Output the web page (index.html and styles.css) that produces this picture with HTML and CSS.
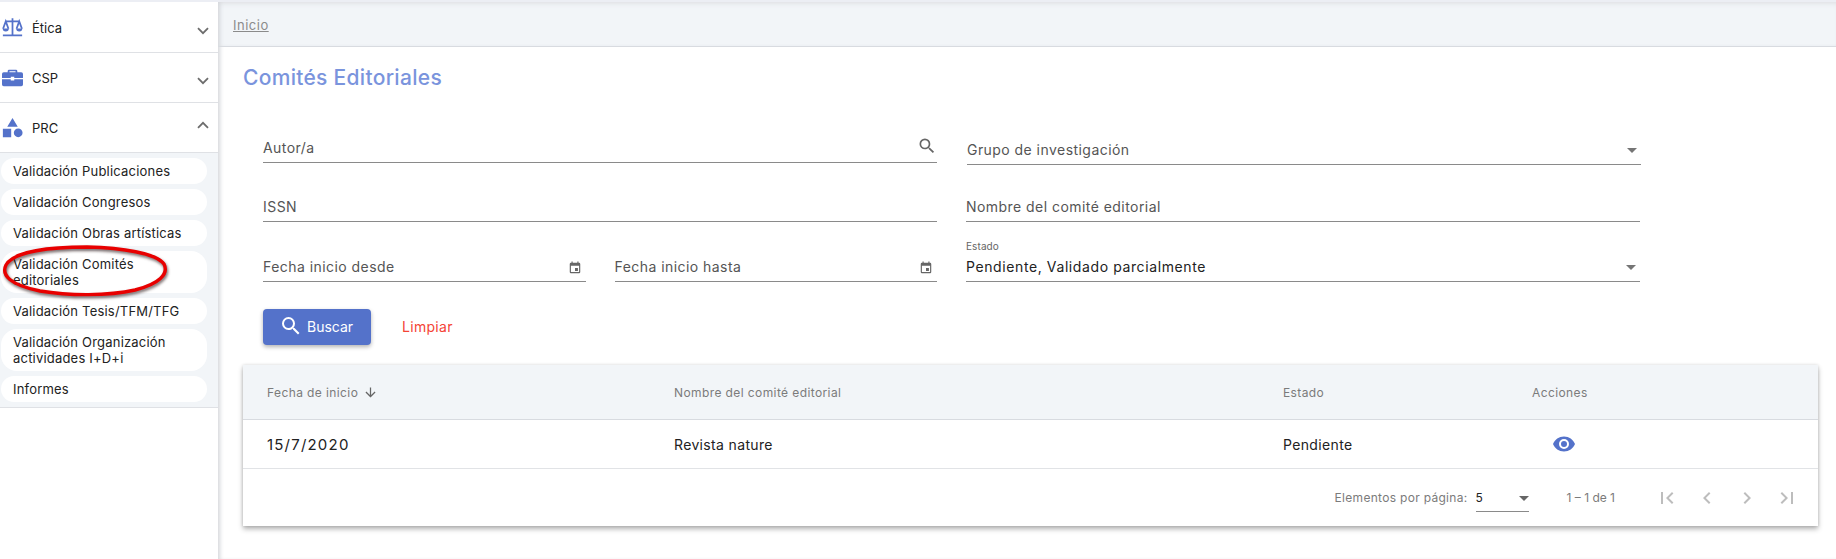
FILE: index.html
```html
<!DOCTYPE html>
<html lang="es">
<head>
    <meta charset="UTF-8">
    <meta name="viewport" content="width=device-width, initial-scale=1.0">
    <title>Comités Editoriales</title>
    <link rel="stylesheet" href="styles.css">
</head>
<body>
    <div class="app">
        <!-- Side menu -->
        <nav class="sidebar">
            <div class="menu-row">
                <svg class="menu-icon" viewBox="0 0 24 24"><path fill="none" stroke="currentColor" stroke-width="2" d="M12 1.500v19M4 5h16M1 21h22M1.200 13.500 4.300 5l3.100 8.500M16.600 13.500 19.700 5l3.100 8.500"/><path fill="currentColor" d="M.8 13.200h7a3.500 3.500 0 0 1-7 0zM16.200 13.200h7a3.500 3.500 0 0 1-7 0z"/></svg>
                <span class="menu-label">Ética</span>
                <svg class="chevron" viewBox="0 0 12 8"><path fill="none" stroke="currentColor" stroke-width="1.8" d="M1 1.200l5 5 5-5"/></svg>
            </div>
            <div class="menu-row">
                <svg class="menu-icon" viewBox="0 0 24 24"><path fill="currentColor" d="M8 3h8a1.500 1.500 0 0 1 1.500 1.500V6H22a2 2 0 0 1 2 2v4.500H14V11h-4v1.500H0V8a2 2 0 0 1 2-2h4.500V4.500A1.500 1.500 0 0 1 8 3zm.5 1.800V6h7V4.800zM0 14h10v1.500h4V14h10v6a2 2 0 0 1-2 2H2a2 2 0 0 1-2-2z"/></svg>
                <span class="menu-label">CSP</span>
                <svg class="chevron" viewBox="0 0 12 8"><path fill="none" stroke="currentColor" stroke-width="1.8" d="M1 1.200l5 5 5-5"/></svg>
            </div>
            <div class="menu-row">
                <svg class="menu-icon" viewBox="0 0 24 24"><path fill="currentColor" d="M12 1l6 10H6zM1 13.500h9.500V23H1zM18.500 13a5 5 0 1 1 0 10 5 5 0 0 1 0-10z"/></svg>
                <span class="menu-label">PRC</span>
                <svg class="chevron up" viewBox="0 0 12 8"><path fill="none" stroke="currentColor" stroke-width="1.8" d="M1 6.800l5-5 5 5"/></svg>
            </div>
            <div class="submenu">
                <a class="pill">Validación Publicaciones</a>
                <a class="pill">Validación Congresos</a>
                <a class="pill">Validación Obras artísticas</a>
                <a class="pill">Validación Comités editoriales</a>
                <a class="pill">Validación Tesis/TFM/TFG</a>
                <a class="pill">Validación Organización actividades I+D+i</a>
                <a class="pill">Informes</a>
            </div>
            <!-- Red mark drawn over the screenshot -->
            <svg class="red-mark" viewBox="0 0 172 60"><path class="mark-line" d="M87 6C52 6 14 10 6 24 1 34 10 44 40 50c30 5 68 5 95-1 24-6 34-16 29-26C156 12 122 7 87 6z"/></svg>
        </nav>

        <main class="content">
            <div class="breadcrumb"><a href="#">Inicio</a></div>
            <h1>Comités Editoriales</h1>

            <!-- Filters -->
            <form class="filters">
                <div class="field">
                    <span class="field-text">Autor/a</span>
                    <svg class="field-icon search" viewBox="0 0 24 24"><path fill="currentColor" d="M15.500 14h-.79l-.28-.27A6.470 6.470 0 0 0 16 9.500 6.500 6.500 0 1 0 9.500 16c1.610 0 3.090-.59 4.230-1.570l.27.28v.79l5 4.990L20.490 19l-4.990-5zm-6 0C7.010 14 5 11.990 5 9.500S7.010 5 9.500 5 14 7.010 14 9.500 11.990 14 9.500 14z"/></svg>
                </div>
                <div class="field shift">
                    <span class="field-text">Grupo de investigación</span>
                    <span class="select-arrow"></span>
                </div>
                <div class="field row-two">
                    <span class="field-text">ISSN</span>
                </div>
                <div class="field row-two">
                    <span class="field-text">Nombre del comité editorial</span>
                </div>
                <div class="date-pair">
                    <div class="field row-three">
                        <span class="field-text">Fecha inicio desde</span>
                        <svg class="field-icon" viewBox="0 0 24 24"><path fill="currentColor" d="M17 12h-5v5h5v-5zM16 1v2H8V1H6v2H5a2 2 0 0 0-2 2v14a2 2 0 0 0 2 2h14a2 2 0 0 0 2-2V5a2 2 0 0 0-2-2h-1V1h-2zm3 18H5V8h14v11z"/></svg>
                    </div>
                    <div class="field row-three">
                        <span class="field-text">Fecha inicio hasta</span>
                        <svg class="field-icon" viewBox="0 0 24 24"><path fill="currentColor" d="M17 12h-5v5h5v-5zM16 1v2H8V1H6v2H5a2 2 0 0 0-2 2v14a2 2 0 0 0 2 2h14a2 2 0 0 0 2-2V5a2 2 0 0 0-2-2h-1V1h-2zm3 18H5V8h14v11z"/></svg>
                    </div>
                </div>
                <div class="field row-three">
                    <label class="float-label">Estado</label>
                    <span class="field-text value">Pendiente, Validado parcialmente</span>
                    <span class="select-arrow"></span>
                </div>
            </form>

            <div class="actions">
                <button type="button" class="btn-search">
                    <svg viewBox="0 0 24 24"><path fill="currentColor" d="M15.500 14h-.79l-.28-.27A6.470 6.470 0 0 0 16 9.500 6.500 6.500 0 1 0 9.500 16c1.610 0 3.090-.59 4.230-1.570l.27.28v.79l5 4.990L20.490 19l-4.990-5zm-6 0C7.010 14 5 11.990 5 9.500S7.010 5 9.500 5 14 7.010 14 9.500 11.990 14 9.500 14z"/></svg>
                    Buscar
                </button>
                <button type="button" class="btn-clear">Limpiar</button>
            </div>

            <!-- Results -->
            <section class="results">
                <div class="grid-row head">
                    <div class="sort">Fecha de inicio
                        <svg viewBox="0 0 24 24"><path fill="currentColor" d="M20 12l-1.410-1.410L13 16.170V4h-2v12.170l-5.580-5.590L4 12l8 8 8-8z"/></svg>
                    </div>
                    <div>Nombre del comité editorial</div>
                    <div>Estado</div>
                    <div>Acciones</div>
                </div>
                <div class="grid-row body">
                    <div class="date-cell">15/7/2020</div>
                    <div>Revista nature</div>
                    <div>Pendiente</div>
                    <div><svg class="eye" viewBox="0 0 24 24"><path fill="currentColor" d="M12 4.500C7 4.500 2.730 7.610 1 12c1.730 4.390 6 7.500 11 7.500s9.270-3.110 11-7.500c-1.730-4.390-6-7.500-11-7.500zM12 17a5 5 0 1 1 0-10 5 5 0 0 1 0 10zm0-8a3 3 0 1 0 0 6 3 3 0 0 0 0-6z"/></svg></div>
                </div>
                <div class="pager">
                    <span class="pager-label">Elementos por página:</span>
                    <div class="page-size"><span>5</span><span class="select-arrow dark"></span></div>
                    <span class="page-range">1 – 1 de 1</span>
                    <div class="pager-buttons">
                        <svg viewBox="0 0 24 24"><path fill="currentColor" d="M18.410 16.590L13.820 12l4.590-4.590L17 6l-6 6 6 6zM6 6h2v12H6z"/></svg>
                        <svg viewBox="0 0 24 24"><path fill="currentColor" d="M15.410 7.410L14 6l-6 6 6 6 1.410-1.410L10.830 12z"/></svg>
                        <svg viewBox="0 0 24 24"><path fill="currentColor" d="M10 6L8.590 7.410 13.170 12l-4.580 4.590L10 18l6-6z"/></svg>
                        <svg viewBox="0 0 24 24"><path fill="currentColor" d="M5.590 7.410L10.180 12l-4.590 4.590L7 18l6-6-6-6zM16 6h2v12h-2z"/></svg>
                    </div>
                </div>
            </section>
        </main>
    </div>
</body>
</html>
```

FILE: styles.css
```css
* {
    box-sizing: border-box;
}
html, body {
    margin: 0;
    height: 100%;
}
body {
    background-color: #fff;
    color: #222;
    font-family: "Inter", "Noto Sans", sans-serif;
    overflow: hidden;
}
.app {
    display: flex;
    height: 559px;
    border-top: 2px solid #eceef4;
}

/* side menu */
.sidebar {
    position: relative;
    width: 218px;
    flex-shrink: 0;
    padding-top: 1px;
}
.menu-row {
    display: flex;
    align-items: center;
    height: 50px;
    padding: 0 9px 0 2px;
    border-bottom: 1px solid #dfe1e5;
}
.menu-icon {
    width: 21px;
    height: 21px;
    color: #5472ca;
    flex-shrink: 0;
}
.menu-label {
    margin-left: 9px;
    font-size: 13px;
    flex: 1;
}
.chevron {
    width: 12px;
    height: 8px;
    color: #6d6d6d;
    margin-top: 6px;
}
.chevron.up {
    margin-top: -6px;
}
.submenu {
    display: flex;
    flex-direction: column;
    gap: 5px;
    padding: 5px 11px 5px 1px;
    background-color: #f2f5f8;
    border-bottom: 1px solid #dfe1e5;
}
.pill {
    display: block;
    padding: 5px 12px;
    background-color: #fff;
    border-radius: 16px;
    font-size: 13px;
    line-height: 16px;
    letter-spacing: .2px;
    color: #222;
}
.red-mark {
    position: absolute;
    left: 0;
    top: 239px;
    width: 172px;
    height: 60px;
    overflow: visible;
}
.mark-line {
    fill: none;
    stroke: #e80000;
    stroke-width: 3.4;
    filter: drop-shadow(1.5px 2px 1.5px rgba(40, 20, 20, .65));
}

/* main area */
.content {
    flex: 1;
    min-width: 0;
    box-shadow: inset 4px 0 4px -2px #d4d6da;
}
.breadcrumb {
    height: 45px;
    padding: 14px 15px 0;
    background-color: #f2f5f8;
    border-bottom: 1px solid #d8dbe0;
    box-shadow: inset 4px 0 4px -2px #d4d6da, inset 0 5px 5px -3px #e2e4e8;
    font-size: 13px;
    line-height: 18px;
    letter-spacing: .5px;
}
.breadcrumb a {
    color: #8b8b8b;
}
h1 {
    margin: 18px 0 0 25px;
    font-size: 21px;
    line-height: 26px;
    font-weight: 500;
    letter-spacing: .3px;
    color: #7a94dd;
}
.filters {
    display: grid;
    grid-template-columns: 674px 674px;
    column-gap: 29px;
    margin: 37px 0 0 45px;
}
.field {
    position: relative;
    display: flex;
    align-items: center;
    height: 35px;
    padding-top: 4px;
    border-bottom: 1px solid #8a8a8a;
    font-size: 14px;
    letter-spacing: .45px;
}
.field-text {
    color: #555;
}
.field-text.value {
    color: #222;
    letter-spacing: .6px;
}
.field.shift {
    margin: 2px -1px 0 1px;
}
.row-two {
    margin-top: 22px;
}
.row-three {
    margin-top: 25px;
}
.date-pair {
    display: flex;
    gap: 29px;
}
.date-pair .field {
    flex: 1;
}
.field-icon {
    position: absolute;
    right: 4px;
    top: 14px;
    width: 14px;
    height: 14px;
    color: #666;
}
.field-icon.search {
    width: 20px;
    height: 20px;
    top: 8px;
    right: 0;
}
.select-arrow {
    position: absolute;
    right: 4px;
    top: 18px;
    width: 0;
    height: 0;
    border-left: 5px solid transparent;
    border-right: 5px solid transparent;
    border-top: 5px solid #757575;
}
.float-label {
    position: absolute;
    left: 0;
    top: -7px;
    font-size: 10px;
    line-height: 12px;
    letter-spacing: .1px;
    color: #666;
}

/* buttons */
.actions {
    display: flex;
    align-items: center;
    gap: 31px;
    margin: 27px 0 0 45px;
}
.btn-search {
    display: flex;
    align-items: center;
    gap: 4px;
    width: 108px;
    height: 36px;
    padding: 0 0 2px 16px;
    background-color: #5472ca;
    color: #fff;
    border: none;
    border-radius: 4px;
    box-shadow: 0 2px 4px rgba(0, 0, 0, .3);
    font-family: inherit;
    font-size: 14px;
}
.btn-search svg {
    width: 24px;
    height: 24px;
}
.btn-clear {
    padding: 0 0 2px;
    background: none;
    border: none;
    color: #f44336;
    font-family: inherit;
    font-size: 14px;
    letter-spacing: .3px;
}

/* results table */
.results {
    width: 1575px;
    margin: 20px 0 0 25px;
    box-shadow: 0 3px 5px rgba(0, 0, 0, .3), 0 0 3px rgba(0, 0, 0, .12);
}
.grid-row {
    display: grid;
    grid-template-columns: 407px 609px 249px 1fr;
    padding-left: 24px;
    align-items: center;
}
.grid-row.head {
    height: 55px;
    background-color: #f2f5f8;
    border-bottom: 1px solid #d8dbe0;
    color: #7b7b7b;
    font-size: 12px;
    letter-spacing: .4px;
}
.grid-row.body {
    height: 49px;
    border-bottom: 1px solid #e1e3e6;
    font-size: 14px;
    letter-spacing: .35px;
    color: #222;
}
.date-cell {
    font-size: 15px;
    letter-spacing: 1.2px;
}
.sort {
    display: flex;
    align-items: center;
    gap: 5px;
}
.sort svg {
    width: 15px;
    height: 15px;
    color: #666;
}
.eye {
    display: block;
    width: 24px;
    height: 24px;
    margin-left: 20px;
    color: #5472ca;
}
.pager {
    display: flex;
    align-items: center;
    justify-content: flex-end;
    height: 57px;
    padding-right: 19px;
    font-size: 12px;
    letter-spacing: .3px;
    color: #7b7b7b;
}
.page-size {
    position: relative;
    display: flex;
    align-items: center;
    width: 53px;
    height: 28px;
    margin-left: 8px;
    border-bottom: 1px solid #8a8a8a;
    font-size: 12px;
    color: #222;
}
.select-arrow.dark {
    top: 12px;
    right: 0;
    border-top-color: #666;
}
.page-range {
    margin: 0 40px 0 38px;
    letter-spacing: 0;
}
.pager-buttons {
    display: flex;
    gap: 16px;
}
.pager-buttons svg {
    width: 24px;
    height: 24px;
    color: #bdbdbd;
}
```
